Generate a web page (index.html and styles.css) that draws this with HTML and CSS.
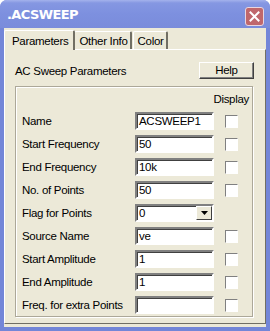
FILE: index.html
```html
<!DOCTYPE html>
<html lang="en">
<head>
  <meta charset="UTF-8">
  <title>.ACSWEEP</title>
  <link rel="stylesheet" href="styles.css">
</head>
<body>
  <div class="window">
    <div class="titlebar">
      <span class="title">.ACSWEEP</span>
      <span class="close">
        <svg width="11" height="11" viewBox="0 0 11 11">
          <path d="M1.5 1.5 L9.5 9.5 M9.5 1.5 L1.5 9.5" stroke="#fff" stroke-width="2" stroke-linecap="square"/>
        </svg>
      </span>
    </div>
    <div class="client">
      <div class="tabs">
        <div class="tab active">Parameters</div>
        <div class="tab">Other Info</div>
        <div class="tab">Color</div>
      </div>
      <div class="panel">
        <div class="panel-head">
          <span>AC Sweep Parameters</span>
          <span class="btn">Help</span>
        </div>
        <div class="group">
          <div class="display-head">Display</div>
          <div class="row"><span class="label">Name</span><span class="field">ACSWEEP1</span><span class="check"></span></div>
          <div class="row"><span class="label">Start Frequency</span><span class="field">50</span><span class="check"></span></div>
          <div class="row"><span class="label">End Frequency</span><span class="field">10k</span><span class="check"></span></div>
          <div class="row"><span class="label">No. of Points</span><span class="field">50</span><span class="check"></span></div>
          <div class="row">
            <span class="label">Flag for Points</span>
            <span class="field select">0<span class="arrow"><svg width="7" height="4" viewBox="0 0 7 4"><path d="M0 0 H7 L3.5 4 Z" fill="#000"/></svg></span></span>
            <span class="check empty"></span>
          </div>
          <div class="row"><span class="label">Source Name</span><span class="field">ve</span><span class="check"></span></div>
          <div class="row"><span class="label">Start Amplitude</span><span class="field">1</span><span class="check"></span></div>
          <div class="row"><span class="label">End Amplitude</span><span class="field">1</span><span class="check"></span></div>
          <div class="row"><span class="label">Freq. for extra Points</span><span class="field"></span><span class="check"></span></div>
        </div>
      </div>
    </div>
  </div>
</body>
</html>
```

FILE: styles.css
```css
body {
  margin: 0;
  font-family: "Liberation Sans", Arial, sans-serif;
  font-size: 11.5px;
  letter-spacing: -0.3px;
  color: #000;
}

.window {
  width: 270px;
  height: 331px;
  box-sizing: border-box;
  background-color: #7386d8; /* inactive XP frame */
  border-radius: 7px 7px 0 0;
  padding: 0 4px 4px 4px;
  display: flex;
  flex-direction: column;
}

.titlebar {
  height: 29px;
  display: flex;
  align-items: center;
  justify-content: space-between;
  margin: 0 -4px;
  padding-left: 7px;
  padding-right: 7px;
  border-radius: 7px 7px 0 0;
  background: linear-gradient(to bottom, #a4b2ec 0px, #8597e2 3px, #7d90df 50%, #7a8cdb 100%);
}

.title {
  color: #fff;
  font-weight: bold;
  font-size: 13px;
  font-family: "DejaVu Sans", sans-serif;
  letter-spacing: -0.6px;
}

.close {
  width: 17px;
  height: 17px;
  border: 1px solid #e8d6e0;
  border-radius: 3px;
  background-color: #c0676c;
  display: flex;
  align-items: center;
  justify-content: center;
  margin-top: 4px;
  margin-right: -1px;
}

.client {
  flex: 1;
  background-color: #ece9d8;
  display: flex;
  flex-direction: column;
  padding: 1px 0 3px 0;
}

.tabs {
  display: flex;
  align-items: flex-end;
  height: 20px;
  padding-left: 1px;
}

.tab {
  height: 17px;
  line-height: 18px;
  padding: 0 2px 0 4px;
  border: 1px solid #fff;
  border-right: 2px solid #716f64;
  border-bottom: none;
  border-radius: 2px 2px 0 0;
  margin-right: 1px;
}

.tab.active {
  height: 19px;
  line-height: 21px;
  padding: 0 5px 0 7px;
  margin-right: -1px;
  margin-left: -1px;
  position: relative;
  z-index: 1;
  background-color: #ece9d8;
  margin-bottom: -1px;
}

.panel {
  flex: 1;
  border: 1px solid #fff;
  border-right-color: #716f64;
  border-bottom-color: #716f64;
  padding: 12px 11px 6px 10px;
  display: flex;
  flex-direction: column;
}

.panel-head {
  display: flex;
  justify-content: space-between;
  align-items: center;
  height: 17px;
  margin-bottom: 7px;
}

.btn {
  width: 53px;
  height: 15px;
  border: 1px solid;
  border-color: #fff #404040 #404040 #fff;
  box-shadow: inset -1px -1px 0 #808080;
  text-align: center;
  line-height: 15px;
}

.group {
  border: 1px solid #aca899;
  box-shadow: 1px 1px 0 #fff, inset 1px 1px 0 #fff;
  padding: 0 3px 0 6px;
  margin-right: 1px;
}

.display-head {
  height: 25px;
  line-height: 24px;
  text-align: right;
}

.row {
  display: flex;
  align-items: center;
  height: 18px;
  margin-bottom: 5px;
}

.row:last-child {
  margin-bottom: 2px;
}

.label {
  flex: 1;
}

.field {
  width: 73px;
  height: 14px;
  line-height: 15px;
  background-color: #fff;
  border: 2px solid;
  border-color: #808080 #fff #fff #808080;
  box-shadow: inset 1px 1px 0 #404040;
  padding-left: 2px;
  margin-right: 11px;
  display: flex;
  justify-content: space-between;
}

.arrow {
  width: 16px;
  height: 14px;
  box-sizing: border-box;
  background-color: #ece9d8;
  border: 1px solid;
  border-color: #fff #404040 #404040 #fff;
  display: flex;
  align-items: center;
  justify-content: center;
}

.check {
  width: 11px;
  height: 11px;
  border: 1px solid;
  border-color: #808080 #fff #fff #808080;
  background-color: #fff;
  margin-right: 11px;
}

.check.empty {
  visibility: hidden;
}
```
